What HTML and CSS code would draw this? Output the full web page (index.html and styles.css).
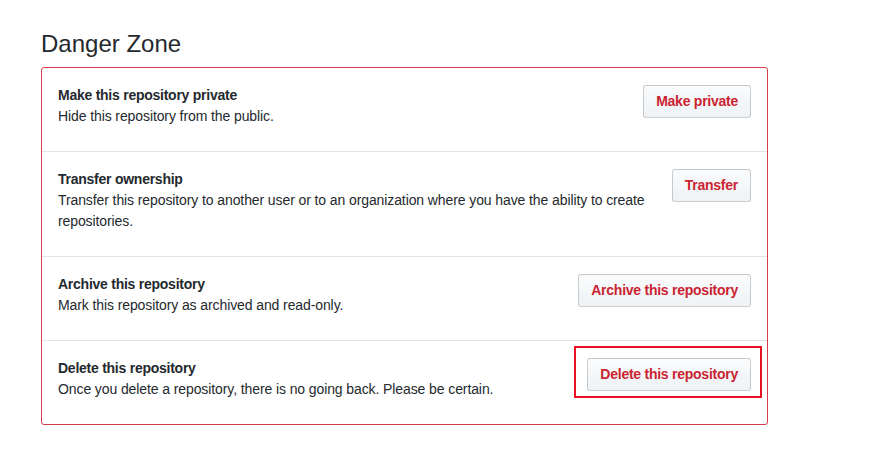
FILE: index.html
```html
<!DOCTYPE html>
<html>
<head>
<meta charset="utf-8">
<link rel="stylesheet" href="styles.css">
</head>
<body>
<div class="page">
  <h2 class="heading">Danger Zone</h2>
  <ul class="box">
    <li class="row">
      <div class="info">
        <strong class="title">Make this repository private</strong>
        <p class="desc">Hide this repository from the public.</p>
      </div>
      <button class="btn">Make private</button>
    </li>
    <li class="row">
      <div class="info">
        <strong class="title">Transfer ownership</strong>
        <p class="desc">Transfer this repository to another user or to an organization where you have the ability to create repositories.</p>
      </div>
      <button class="btn">Transfer</button>
    </li>
    <li class="row">
      <div class="info">
        <strong class="title">Archive this repository</strong>
        <p class="desc">Mark this repository as archived and read-only.</p>
      </div>
      <button class="btn">Archive this repository</button>
    </li>
    <li class="row">
      <div class="info">
        <strong class="title">Delete this repository</strong>
        <p class="desc">Once you delete a repository, there is no going back. Please be certain.</p>
      </div>
      <div class="highlight-wrap">
        <button class="btn">Delete this repository</button>
        <span class="highlight"></span>
      </div>
    </li>
  </ul>
</div>
</body>
</html>
```
FILE: styles.css
```css
* { box-sizing: border-box; }
html, body { margin: 0; padding: 0; background: #fff; }
body {
  font-family: "Liberation Sans", Arial, sans-serif;
  font-size: 14px;
  line-height: 21px;
  color: #24292e;
  letter-spacing: -0.1px;
}
.page {
  padding: 26px 0 0 41px;
  width: 768px;
}
.heading {
  margin: 0 0 5px 0;
  font-size: 24px;
  line-height: 36px;
  font-weight: 400;
  letter-spacing: 0;
}
.box {
  list-style: none;
  margin: 0;
  padding: 0;
  width: 727px;
  border: 1px solid #d73a49;
  border-radius: 3px;
}
.row {
  display: flex;
  align-items: flex-start;
  padding: 16px;
  border-top: 1px solid #e1e4e8;
}
.row:first-child { border-top: 0; }
.info { flex: 1; padding-right: 12px; }
.title { display: block; font-weight: 700; letter-spacing: -0.25px; line-height: 22px; }
.desc { margin: 0 0 8px 0; }
.btn {
  flex: none;
  font-family: inherit;
  font-size: 14px;
  font-weight: 700;
  letter-spacing: -0.25px;
  line-height: 19px;
  padding: 6px 12px;
  color: #cb2431;
  background: linear-gradient(-180deg, #fafbfc 0%, #eff3f6 90%);
  border: 1px solid rgba(27,31,35,0.2);
  border-radius: 3px;
  margin-top: 1px;
}
.highlight-wrap { position: relative; flex: none; display: flex; }
.highlight {
  position: absolute;
  left: -13px; right: -11px; top: -11px; bottom: -7px;
  border: 2px solid #e81123;
}
```
